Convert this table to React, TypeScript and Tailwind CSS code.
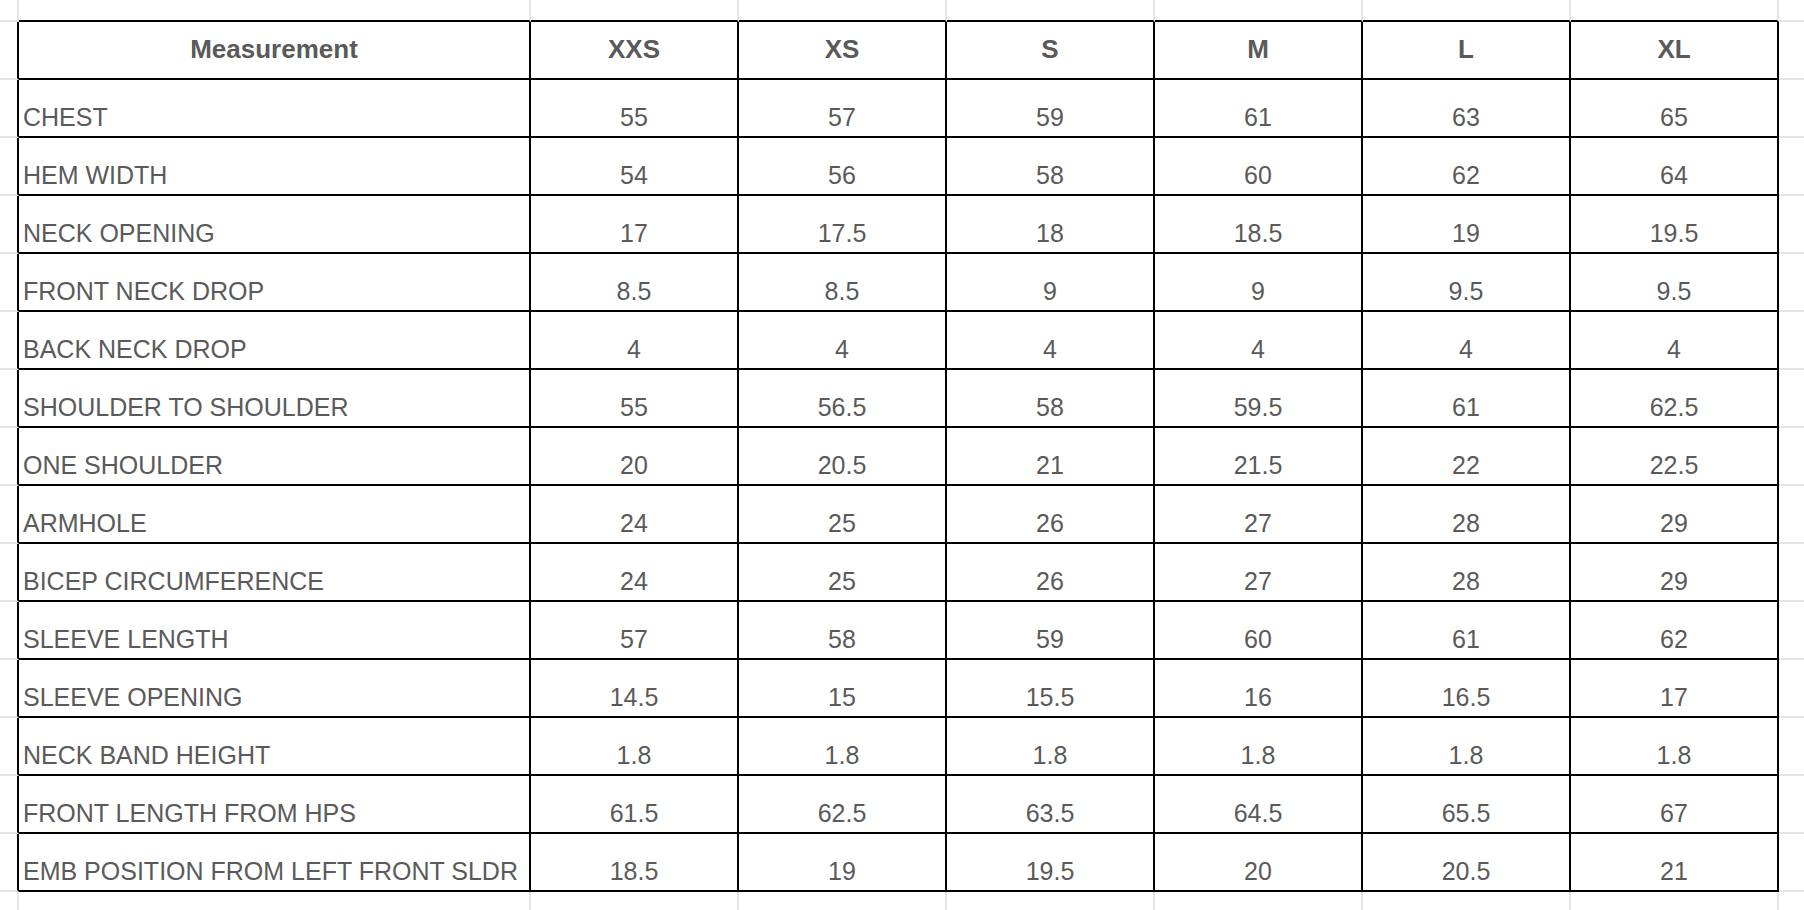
import React from 'react'

const sizes = ['XXS', 'XS', 'S', 'M', 'L', 'XL']

const rows: [string, string[]][] = [
    ['CHEST', ['55', '57', '59', '61', '63', '65']],
    ['HEM WIDTH', ['54', '56', '58', '60', '62', '64']],
    ['NECK OPENING', ['17', '17.5', '18', '18.5', '19', '19.5']],
    ['FRONT NECK DROP', ['8.5', '8.5', '9', '9', '9.5', '9.5']],
    ['BACK NECK DROP', ['4', '4', '4', '4', '4', '4']],
    ['SHOULDER TO SHOULDER', ['55', '56.5', '58', '59.5', '61', '62.5']],
    ['ONE SHOULDER', ['20', '20.5', '21', '21.5', '22', '22.5']],
    ['ARMHOLE', ['24', '25', '26', '27', '28', '29']],
    ['BICEP CIRCUMFERENCE', ['24', '25', '26', '27', '28', '29']],
    ['SLEEVE LENGTH', ['57', '58', '59', '60', '61', '62']],
    ['SLEEVE OPENING', ['14.5', '15', '15.5', '16', '16.5', '17']],
    ['NECK BAND HEIGHT', ['1.8', '1.8', '1.8', '1.8', '1.8', '1.8']],
    ['FRONT LENGTH FROM HPS', ['61.5', '62.5', '63.5', '64.5', '65.5', '67']],
    ['EMB POSITION FROM LEFT FRONT SLDR', ['18.5', '19', '19.5', '20', '20.5', '21']],
]

// sheet is 17 rows x 9 cols, the table sits in rows 1..15, cols 1..7
const ROWS = 17
const COLS = 9

const inTable = (r: number, c: number) => r >= 1 && r <= 15 && c >= 1 && c <= 7

function cellText(r: number, c: number): string {
    if (r === 1) return c === 1 ? 'Measurement' : sizes[c - 2]
    const row = rows[r - 2]
    return c === 1 ? row[0] : row[1][c - 2]
}

const App = () => {
    const cells = []
    for (let r = 0; r < ROWS; r++) {
        for (let c = 0; c < COLS; c++) {
            const rightBlack = inTable(r, c) || inTable(r, c + 1)
            const bottomBlack = inTable(r, c) || inTable(r + 1, c)
            const right = c === COLS - 1 ? '' : rightBlack ? 'border-r-2 border-r-black' : 'border-r-2 border-r-[#e3e3e3]'
            const bottom = r === ROWS - 1 ? '' : bottomBlack ? 'border-b-2 border-b-black' : 'border-b-2 border-b-[#e3e3e3]'

            let content = null
            let align = ''
            if (inTable(r, c)) {
                const text = cellText(r, c)
                if (r === 1) {
                    align = 'items-center justify-center pb-[2px] font-bold text-[26px]'
                } else if (c === 1) {
                    align = 'items-end justify-start pl-1 pb-[5px] text-[25px]'
                } else {
                    align = 'items-end justify-center pb-[5px] text-[25px]'
                }
                content = <span className="leading-[28px] whitespace-nowrap">{text}</span>
            }

            cells.push(
                <div
                    key={r + '-' + c}
                    className={`flex overflow-hidden ${right} ${bottom} ${align}`}
                >
                    {content}
                </div>
            )
        }
    }

    return (
        <div className="w-full h-[910px] bg-white overflow-hidden text-[#5a5a5a] font-['Liberation_Sans',Arial,sans-serif]">
            <div className="grid h-full grid-cols-[19px_512px_repeat(6,208px)_1fr] grid-rows-[22px_repeat(15,58px)_1fr]">
                {cells}
            </div>
        </div>
    )
}

export default App
